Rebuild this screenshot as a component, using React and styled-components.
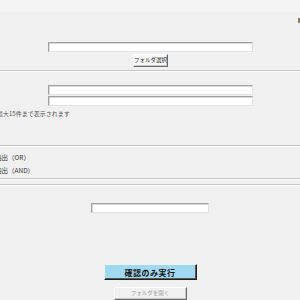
import styled, { createGlobalStyle } from "styled-components";

const Global = createGlobalStyle`
html, body {
    margin: 0;
    padding: 0;
    background: #f0f0f0;
}
body {
    font-family: "Noto Sans CJK JP", "Noto Sans", sans-serif;
    color: #333;
}
`

const Page = styled.div`
width: 300px;
height: 300px;
overflow: hidden;
display: flex;
flex-direction: column;
`

const TitleBand = styled.div`
height: 12px;
background: #f4f4f4;
flex-shrink: 0;
`

const EdgeRow = styled.div`
display: flex;
justify-content: flex-end;
height: 5px;
margin-top: 6px;
flex-shrink: 0;
`

const EdgeMark = styled.span`
width: 2px;
height: 5px;
background: #8a7a60;
`

const Block = styled.div`
display: flex;
flex-direction: column;
align-items: ${p => p.$center ? "center" : "flex-start"};
padding-top: ${p => p.$top || 0}px;
height: ${p => p.$h}px;
box-sizing: border-box;
flex-shrink: 0;
`

const TextField = styled.input`
box-sizing: border-box;
width: ${p => p.$w}px;
height: 10px;
margin: 0 0 ${p => p.$gap || 0}px ${p => p.$left || 0}px;
padding: 0;
background: #fff;
border: 1px solid;
border-color: #a0a0a0 #e3e3e3 #e3e3e3 #a0a0a0;
box-shadow: inset 1px 1px 0 #dadada;
outline: none;
flex-shrink: 0;
`

const ClassicButton = styled.button`
box-sizing: border-box;
width: ${p => p.$w}px;
height: 13px;
margin-top: ${p => p.$top || 2}px;
padding: 0;
font-family: "Noto Sans CJK JP", sans-serif;
font-size: 5.5px;
line-height: 1;
color: ${p => p.disabled ? "#a0a0a0" : "#222"};
background: ${p => p.disabled ? "#f0f0f0" : "#f8f8f8"};
border: 1px solid;
border-color: #fff #6a6a6a #6a6a6a #fff;
box-shadow: inset -1px -1px 0 #c8c8c8;
flex-shrink: 0;
`

const Divider = styled.div`
height: 0;
border-top: 1px solid #c6c6c6;
border-bottom: 1px solid #fdfdfd;
flex-shrink: 0;
`

const Note = styled.div`
margin: 4px 0 0 -3px;
font-size: 6px;
line-height: 8px;
color: #555;
white-space: nowrap;
`

const OptionLabel = styled.div`
margin-left: -5px;
font-size: 6.5px;
line-height: 8px;
height: 14px;
color: #333;
white-space: nowrap;
`

const RunButton = styled.button`
box-sizing: border-box;
width: 93px;
height: 16px;
padding: 0;
font-family: "Noto Sans CJK JP", sans-serif;
font-weight: bold;
font-size: 8px;
letter-spacing: 0.5px;
color: #111;
background: #a1d8ef;
border: 1px solid;
border-color: #e8f6fc #202020 #202020 #e8f6fc;
box-shadow: inset -1px -1px 0 #555;
flex-shrink: 0;
`

const App = () => {
    return (
        <>
            <Global />
            <Page>
                <TitleBand />
                <EdgeRow><EdgeMark /></EdgeRow>
                <Block $h={47} $top={19}>
                    <TextField $w={205} $left={48} />
                    <ClassicButton $w={35} style={{ alignSelf: "center", marginLeft: 1 }}>フォルダ選択</ClassicButton>
                </Block>
                <Divider />
                <Block $h={73} $top={13}>
                    <TextField $w={205} $left={48} $gap={1} />
                    <TextField $w={205} $left={48} />
                    <Note>最大15件まで表示されます</Note>
                </Block>
                <Divider />
                <Block $h={31} $top={6}>
                    <OptionLabel>抽出（OR）</OptionLabel>
                    <OptionLabel>抽出（AND）</OptionLabel>
                </Block>
                <Divider />
                <Block $h={4} />
                <Divider />
                <Block $h={78} $top={17} $center>
                    <TextField $w={118} />
                </Block>
                <Block $h={40} $center>
                    <RunButton>確認のみ実行</RunButton>
                    <ClassicButton $w={73} $top={7} disabled>フォルダを開く</ClassicButton>
                </Block>
            </Page>
        </>
    );
}

export default App;
